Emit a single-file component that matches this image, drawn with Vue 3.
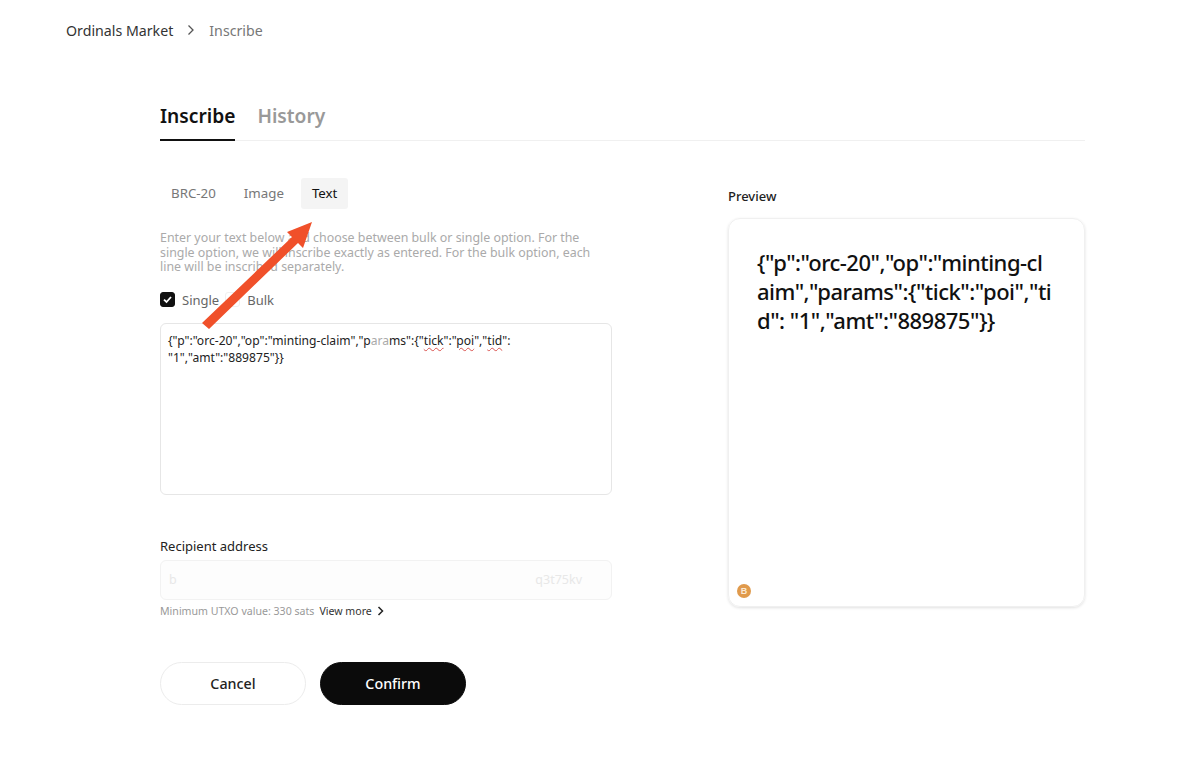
<script setup>
import { ref } from 'vue'

const mainTabs = ['Inscribe', 'History']
const subTabs = ['BRC-20', 'Image', 'Text']
const activeMain = ref('Inscribe')
const activeSub = ref('Text')
const mode = ref('single')
</script>

<template>
  <div class="page">
    <nav class="crumbs">
      <span class="crumb-root">Ordinals Market</span>
      <svg class="crumb-sep" width="8" height="12" viewBox="0 0 8 12">
        <path d="M1.500 1.500 6 6l-4.500 4.500" fill="none" stroke="#555" stroke-width="1.300" />
      </svg>
      <span class="crumb-current">Inscribe</span>
    </nav>

    <main class="content">
      <div class="main-tabs">
        <div
          v-for="t in mainTabs"
          :key="t"
          class="main-tab"
          :class="{ active: activeMain === t }"
          @click="activeMain = t"
        >{{ t }}</div>
      </div>

      <div class="columns">
        <section class="form">
          <div class="sub-tabs">
            <div
              v-for="t in subTabs"
              :key="t"
              class="sub-tab"
              :class="{ active: activeSub === t }"
              @click="activeSub = t"
            >{{ t }}</div>
          </div>

          <p class="desc">
            Enter your text below and choose between bulk or single option. For the single option, we will inscribe exactly as entered. For the bulk option, each line will be inscribed separately.
          </p>

          <div class="modes">
            <label class="mode" @click="mode = 'single'">
              <span class="check" :class="{ on: mode === 'single' }">
                <svg v-if="mode === 'single'" width="11" height="11" viewBox="0 0 11 11">
                  <path d="M2 5.600 4.500 8 9 3" fill="none" stroke="#fff" stroke-width="1.800" />
                </svg>
              </span>
              Single
            </label>
            <label class="mode" @click="mode = 'bulk'">
              <span class="check" :class="{ on: mode === 'bulk' }"></span>
              Bulk
            </label>
          </div>

          <div class="text-box">{"p":"orc-20","op":"minting-claim","p<span class="smudge">ara</span>ms":{"<span class="typo">tick</span>":"<span class="typo">poi</span>","<span class="typo">tid</span>":<br />"1","amt":"889875"}}</div>

          <label class="field-label">Recipient address</label>
          <div class="address">
            <span class="addr-start">b</span>
            <span class="addr-end">q3t75kv</span>
          </div>
          <div class="hint">
            <span class="hint-text">Minimum UTXO value: 330 sats</span>
            <span class="hint-link">View more</span>
            <svg width="7" height="10" viewBox="0 0 7 10">
              <path d="M1.500 1 5.500 5l-4 4" fill="none" stroke="#222" stroke-width="1.500" />
            </svg>
          </div>

          <div class="actions">
            <button class="btn cancel">Cancel</button>
            <button class="btn confirm">Confirm</button>
          </div>
        </section>

        <aside class="preview">
          <div class="preview-title">Preview</div>
          <div class="preview-card">
            <div class="preview-text">{"p":"orc-20","op":"minting-claim","params":{"tick":"poi","tid": "1","amt":"889875"}}</div>
            <span class="coin">
              <svg width="14" height="14" viewBox="0 0 14 14">
                <circle cx="7" cy="7" r="7" fill="#e09a4c" />
                <text x="7" y="10" text-anchor="middle" font-size="9" font-weight="700" fill="#fbe9d4" font-family="Liberation Sans, sans-serif">B</text>
              </svg>
            </span>
          </div>
        </aside>
      </div>
    </main>

    <svg class="arrow" width="120" height="116" viewBox="0 0 120 116">
      <path d="M113 5 88 15l5 5L3 106l7 6 89-86 5 5z" fill="#f0502a" />
    </svg>
  </div>
</template>

<style scoped>
.page {
  position: relative;
  width: 1200px;
  height: 758px;
  background: #fff;
  color: #111;
  font-family: "Noto Sans", "Open Sans", sans-serif;
  overflow: hidden;
}
.crumbs {
  display: flex;
  align-items: center;
  height: 20px;
  padding: 20px 0 0 66px;
  font-size: 14.200px;
}
.crumb-root {
  color: #333;
}
.crumb-sep {
  margin: 0 14px 0 14px;
}
.crumb-current {
  color: #777;
}
.content {
  width: 925px;
  margin: 60px 0 0 160px;
}
.main-tabs {
  display: flex;
  gap: 22px;
  height: 40px;
  border-bottom: 1px solid #f0f0f0;
}
.main-tab {
  height: 41px;
  box-sizing: border-box;
  line-height: 31px;
  font-size: 19.200px;
  font-weight: 600;
  color: #999;
  cursor: pointer;
}
.main-tab.active {
  color: #111;
  border-bottom: 2px solid #111;
}
.columns {
  display: flex;
  justify-content: space-between;
}
.form {
  width: 452px;
  padding-top: 37px;
}
.sub-tabs {
  display: flex;
  gap: 6px;
}
.sub-tab {
  height: 31px;
  padding: 0 11px;
  line-height: 31px;
  font-size: 13.300px;
  color: #777;
  border-radius: 3px;
  cursor: pointer;
}
.sub-tab.active {
  color: #111;
  background: #f4f4f4;
}
.desc {
  margin: 22px 0 0;
  font-size: 12.400px;
  line-height: 14.500px;
  color: #aaa;
}
.modes {
  display: flex;
  gap: 6px;
  margin-top: 17px;
}
.mode {
  display: flex;
  align-items: center;
  gap: 7px;
  height: 16px;
  font-size: 13px;
  color: #666;
  cursor: pointer;
}
.check {
  display: flex;
  align-items: center;
  justify-content: center;
  width: 15px;
  height: 15px;
  box-sizing: border-box;
  border: 1px solid #f0f0f0;
  border-radius: 3px;
}
.check.on {
  background: #111;
  border-color: #111;
}
.text-box {
  height: 172px;
  box-sizing: border-box;
  margin-top: 15px;
  padding: 8px 7px;
  border: 1px solid #e6e6e6;
  border-radius: 6px;
  font-size: 12.100px;
  line-height: 17px;
  color: #222;
}
.smudge {
  color: #aaa;
}
.typo {
  text-decoration: underline wavy #d9534f 1px;
  text-underline-offset: 2px;
}
.field-label {
  display: block;
  margin-top: 43px;
  font-size: 13px;
  line-height: 16px;
  color: #222;
}
.address {
  display: flex;
  justify-content: space-between;
  align-items: center;
  height: 40px;
  box-sizing: border-box;
  margin-top: 6px;
  padding: 0 29px 0 8px;
  border: 1px solid #f2f2f2;
  border-radius: 6px;
  background: #fdfdfd;
  font-size: 12.500px;
  color: #e8e8e8;
}
.hint {
  display: flex;
  align-items: center;
  height: 14px;
  margin-top: 4px;
  font-size: 10.600px;
}
.hint-text {
  color: #999;
}
.hint-link {
  margin: 0 5px;
  color: #333;
}
.actions {
  display: flex;
  gap: 14px;
  margin-top: 44px;
}
.btn {
  width: 146px;
  height: 43px;
  border-radius: 22px;
  font-family: inherit;
  font-size: 14.300px;
  font-weight: 500;
  cursor: pointer;
}
.cancel {
  background: #fff;
  border: 1px solid #ececec;
  color: #222;
}
.confirm {
  background: #0b0b0b;
  border: 1px solid #0b0b0b;
  color: #fff;
}
.preview {
  width: 357px;
  padding-top: 47px;
}
.preview-title {
  font-size: 13px;
  font-weight: 500;
  line-height: 16px;
  color: #222;
}
.preview-card {
  position: relative;
  height: 389px;
  box-sizing: border-box;
  margin-top: 14px;
  padding: 29px 32px 0 28px;
  border: 1px solid #f0f0f0;
  border-radius: 12px;
  box-shadow: 0 1px 3px rgba(0, 0, 0, 0.12);
}
.preview-text {
  font-size: 22px;
  letter-spacing: -0.500px;
  line-height: 29px;
  font-weight: 500;
  word-break: break-all;
  color: #111;
}
.coin {
  position: absolute;
  left: 8px;
  bottom: 8px;
  width: 14px;
  height: 14px;
  margin-bottom: 3px;
}
.arrow {
  position: absolute;
  left: 199px;
  top: 217px;
}
</style>
